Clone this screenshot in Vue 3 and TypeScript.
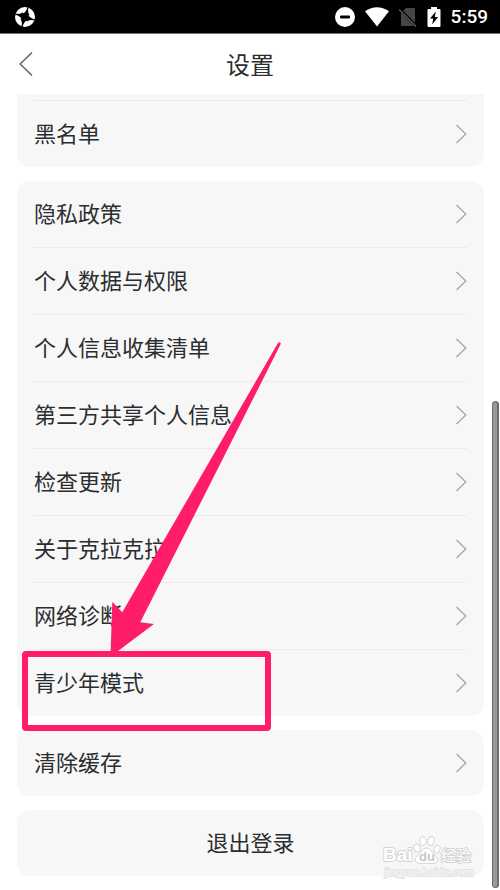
<script setup lang="ts">
interface Item {
  label: string
}

const groups: Item[][] = [
  [{ label: '黑名单' }],
  [
    { label: '隐私政策' },
    { label: '个人数据与权限' },
    { label: '个人信息收集清单' },
    { label: '第三方共享个人信息' },
    { label: '检查更新' },
    { label: '关于克拉克拉' },
    { label: '网络诊断' },
    { label: '青少年模式' },
  ],
  [{ label: '清除缓存' }],
]

const bladeAngles: number[] = [0, 90, 180, 270]
</script>

<template>
  <div class="screen">
    <div class="status">
      <svg class="app-mark" viewBox="0 0 20 20" width="20" height="20">
        <circle cx="10" cy="10" r="10" fill="#fff" />
        <path
          v-for="angle in bladeAngles"
          :key="angle"
          d="M5 9Q11 6 12.600 0L13.800 0.400Q12 4 14.500 8L10 11Z"
          :transform="`rotate(${angle} 10 10)`"
          fill="#000"
        />
      </svg>
      <div class="indicators">
        <svg viewBox="0 0 20 20" width="20" height="20">
          <circle cx="10" cy="10" r="10" fill="#fff" />
          <rect x="5" y="8.5" width="10" height="3" rx="1" fill="#000" />
        </svg>
        <svg viewBox="0 0 24 20" width="24" height="20">
          <path d="M0 4.2Q12-3.6 24 4.2L12 19.5Z" fill="#fff" />
        </svg>
        <svg viewBox="0 0 18 20" width="18" height="20">
          <path d="M7 1H15Q16 1 16 2V19H3Q2 19 2 18V6Z" fill="#464646" />
          <path d="M0 1.5 17 19" stroke="#000" stroke-width="3" />
          <path d="M0 2.5 17 19.5" stroke="#5a5a5a" stroke-width="1.4" />
        </svg>
        <svg viewBox="0 0 14 20" width="14" height="20">
          <path d="M4 0H10V2H12.500Q13.500 2 13.500 3V19Q13.500 20 12.500 20H1.500Q.5 20 .5 19V3Q.5 2 1.500 2H4Z" fill="#fff" />
          <path d="M8.800 4.500 3 11.500H6.200L5.200 17.500 11 10H7.800Z" fill="#000" />
        </svg>
        <span class="time">5:59</span>
      </div>
    </div>

    <header class="header">
      <button class="back" type="button" aria-label="返回">
        <svg viewBox="0 0 14 24" width="14" height="24">
          <path d="M13 0.500 1.200 12 13 23.500" fill="none" stroke="#666" stroke-width="1.500" />
        </svg>
      </button>
      <h1>设置</h1>
    </header>

    <main class="content">
      <ul v-for="(group, i) in groups" :key="i" class="card" :class="{ continued: i === 0 }">
        <li v-for="item in group" :key="item.label">
          <button class="row" type="button">
            <span class="label">{{ item.label }}</span>
            <svg viewBox="0 0 12 20" width="12" height="20">
              <path d="M1.500 1 10.800 10 1.500 19" fill="none" stroke="#aaa" stroke-width="1.400" />
            </svg>
          </button>
        </li>
      </ul>
      <button class="logout" type="button"><span class="label">退出登录</span></button>
    </main>

    <div class="scrollbar"></div>

    <svg class="watermark" viewBox="0 0 92 44" width="92" height="44">
      <text class="brand" x="0" y="26">Bai</text>
      <g fill="#fff" stroke="#d4d4d4" stroke-width="1">
        <ellipse cx="34" cy="13" rx="3" ry="4" transform="rotate(-15 34 13)" />
        <ellipse cx="40" cy="6" rx="3" ry="4.500" />
        <ellipse cx="48" cy="6" rx="3" ry="4.500" transform="rotate(12 48 6)" />
        <ellipse cx="54" cy="14" rx="3" ry="4" transform="rotate(15 54 14)" />
        <path d="M43.500 13C48 13 49 18 53 21 57 25 54 29 49 28.500 45 28 42 28 38.500 28.500 33 29 30 25 34 21 38 18 39 13 43.500 13Z" />
      </g>
      <text class="du" x="44" y="26" text-anchor="middle">du</text>
      <text class="cn" x="58" y="26">经验</text>
      <text class="site" x="46" y="41" text-anchor="middle">jingyan.baidu.com</text>
    </svg>

    <div class="highlight"></div>
    <svg class="arrow" viewBox="0 0 172 314" width="172" height="314" aria-hidden="true">
      <path d="M169.200 0.500Q172 0 171.700 2L31.300 280.300 45 282 9 309V313H1.500L3.300 259.700 13.300 270.300Z" />
    </svg>
  </div>
</template>

<style>
body {
  margin: 0;
  background: #fff;
}
</style>

<style scoped>
.screen {
  position: relative;
  overflow: hidden;
  color: #2b2d2f;
  font-family: "Noto Sans CJK SC", sans-serif;
}

.screen svg {
  display: block;
  flex: none;
}

.status {
  display: flex;
  align-items: center;
  justify-content: space-between;
  box-sizing: border-box;
  height: 34px;
  padding: 0 12px 0 15px;
  background: #000;
  border-bottom: 1px solid #777;
}

.indicators {
  display: flex;
  align-items: center;
  gap: 10px;
}

.time {
  color: #fff;
  font: 500 19px/24px Roboto, sans-serif;
}

.header {
  display: grid;
  grid-template-columns: 44px 1fr 44px;
  align-items: center;
  height: 60px;
}

.header h1 {
  margin: 0;
  font-size: 24px;
  font-weight: 400;
  line-height: 36px;
  text-align: center;
}

button {
  border: 0;
  background: none;
  color: inherit;
  font: inherit;
  cursor: pointer;
}

.back {
  padding: 8px 0 8px 19px;
}

.content {
  display: grid;
  gap: 14px;
  padding: 0 16px 14px 17px;
}

.card {
  margin: 0;
  padding: 0;
  list-style: none;
  background: #f7f7f7;
  border-radius: 13px;
}

.card li {
  margin: 0 17px;
}

.card li + li,
.continued li {
  border-top: 1px solid #ebebeb;
}

.continued {
  padding-top: 6px;
  border-radius: 0 0 13px 13px;
}

.row,
.logout {
  display: flex;
  align-items: center;
  width: 100%;
  height: 66px;
  padding: 0;
}

.row {
  justify-content: space-between;
}

.logout {
  justify-content: center;
  background: #f7f7f7;
  border-radius: 13px;
}

.label {
  padding-bottom: 4px;
  font-size: 22px;
  line-height: 32px;
}

.scrollbar {
  position: absolute;
  top: 401px;
  right: 1px;
  bottom: 2px;
  box-sizing: border-box;
  width: 7px;
  background: #999;
  border: 1px solid #6c6c6c;
  border-right-width: 2px;
  border-radius: 4px;
}

.highlight {
  position: absolute;
  top: 651px;
  left: 22px;
  box-sizing: border-box;
  width: 249px;
  height: 80px;
  border: 6px solid #ff1d6b;
  border-radius: 4px;
}

.arrow {
  position: absolute;
  top: 342px;
  left: 109px;
  fill: #ff1d6b;
  pointer-events: none;
}

.watermark {
  position: absolute;
  right: 25px;
  bottom: 11px;
  overflow: visible;
  pointer-events: none;
}

.watermark text {
  fill: #fff;
  stroke: #d4d4d4;
  stroke-width: 2px;
  paint-order: stroke;
  font-family: "Liberation Sans", "Noto Sans CJK SC", sans-serif;
}

.watermark .brand {
  font-size: 19px;
  font-weight: 700;
}

.watermark .du {
  fill: #c8c8c8;
  stroke: none;
  font-size: 13px;
  font-weight: 700;
}

.watermark .cn {
  font-size: 15px;
}

.watermark .site {
  fill: #fafafa;
  stroke: #e2e2e2;
  font-size: 11px;
}
</style>
